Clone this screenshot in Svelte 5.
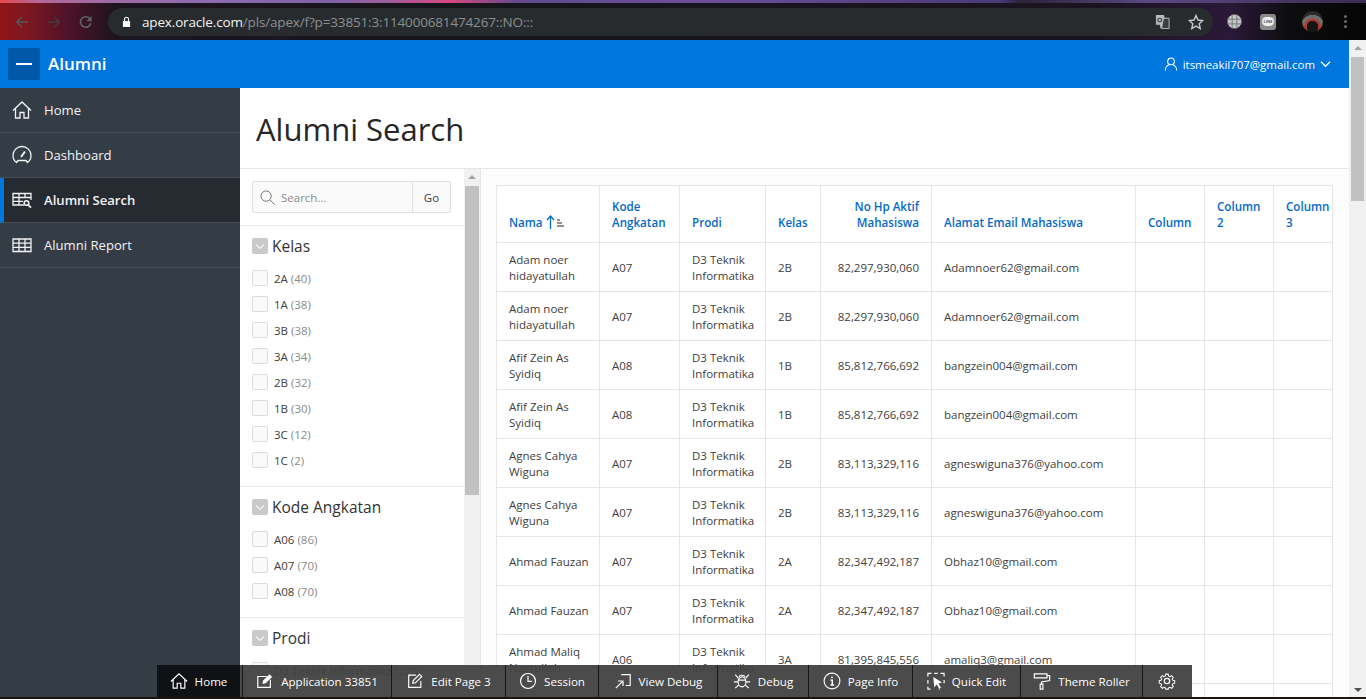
<script>
  const nav = [
    { label: 'Home', icon: 'home' },
    { label: 'Dashboard', icon: 'gauge' },
    { label: 'Alumni Search', icon: 'search', active: true },
    { label: 'Alumni Report', icon: 'table' }
  ];
  const groups = [
    { title: 'Kelas', items: [['2A', 40], ['1A', 38], ['3B', 38], ['3A', 34], ['2B', 32], ['1B', 30], ['3C', 12], ['1C', 2]] },
    { title: 'Kode Angkatan', items: [['A06', 86], ['A07', 70], ['A08', 70]] },
    { title: 'Prodi', items: [['D3 Teknik Informatika', 226]] }
  ];
  const base = [
    ['Adam noer hidayatullah', 'A07', '2B', '82,297,930,060', 'Adamnoer62@gmail.com'],
    ['Adam noer hidayatullah', 'A07', '2B', '82,297,930,060', 'Adamnoer62@gmail.com'],
    ['Afif Zein As Syidiq', 'A08', '1B', '85,812,766,692', 'bangzein004@gmail.com'],
    ['Afif Zein As Syidiq', 'A08', '1B', '85,812,766,692', 'bangzein004@gmail.com'],
    ['Agnes Cahya Wiguna', 'A07', '2B', '83,113,329,116', 'agneswiguna376@yahoo.com'],
    ['Agnes Cahya Wiguna', 'A07', '2B', '83,113,329,116', 'agneswiguna376@yahoo.com'],
    ['Ahmad Fauzan', 'A07', '2A', '82,347,492,187', 'Obhaz10@gmail.com'],
    ['Ahmad Fauzan', 'A07', '2A', '82,347,492,187', 'Obhaz10@gmail.com'],
    ['Ahmad Maliq Nasrulloh', 'A06', '3A', '81,395,845,556', 'amaliq3@gmail.com'],
    ['Ahmad Maliq Nasrulloh', 'A06', '3A', '81,395,845,556', 'amaliq3@gmail.com']
  ];
  const tools = [
    { label: 'Home', icon: 'home', active: true },
    { label: 'Application 33851', icon: 'app' },
    { label: 'Edit Page 3', icon: 'edit' },
    { label: 'Session', icon: 'clock' },
    { label: 'View Debug', icon: 'view' },
    { label: 'Debug', icon: 'bug' },
    { label: 'Page Info', icon: 'info' },
    { label: 'Quick Edit', icon: 'quick' },
    { label: 'Theme Roller', icon: 'roller' },
    { label: '', icon: 'gear' }
  ];
</script>

{#snippet glyph(name)}
  <svg class="glyph" viewBox="0 0 20 20" fill="none" stroke="currentColor" stroke-width="1.3" aria-hidden="true">
    {#if name === 'home'}
      <path d="M1 10.500 10 2l9 8.500M3.500 8.500V18H8v-5.500h4V18h4.500V8.500" />
    {:else if name === 'gauge'}
      <path d="M4.500 17.500C2.300 16 1 13.400 1 10.500a9 9 0 0 1 18 0c0 2.900-1.300 5.500-3.500 7l-1.500-2H6z" /><path d="m9 12 4-5.500" stroke-width="2" />
    {:else if name === 'search'}
      <path d="M12 15H1V3.500h18V10M1 7.500h18M1 11.300h10M7 3.500V15M13 3.500V8" /><circle cx="14.500" cy="13" r="2.300" stroke-width="1.600" /><path d="m16.300 15 2.700 2.700" stroke-width="1.800" />
    {:else if name === 'table'}
      <path d="M1 4h18v12.500H1zM1 8.200h18M1 12.300h18M7 4v12.500M13 4v12.500" />
    {:else if name === 'app'}
      <path d="M16 8.500V17H2V5h10" /><path d="M8 12.500l.3-2.500L15 3.500l2 2L10.500 12z" fill="currentColor" />
    {:else if name === 'edit'}
      <path d="M16.500 10v7H3V3.500h8" /><path d="m7.500 12.500.6-3L15 2.500l2.500 2.500-7 7z" />
    {:else if name === 'clock'}
      <circle cx="10" cy="10" r="8.300" /><path d="M10 4.500V10.500H14.500" />
    {:else if name === 'view'}
      <path d="M8 3h10v12h-5" /><path d="M2 18l8-8M4.500 10H10v5.500" />
    {:else if name === 'bug'}
      <ellipse cx="10" cy="11" rx="4.300" ry="5.500" /><path d="M6.500 5.500c1-2.500 6-2.500 7 0M2.500 3l3.500 4M17.500 3 14 7M1 11h4.500M19 11h-4.500M2.500 18l3.500-3.500M17.500 18 14 14.500M6 9h8" />
    {:else if name === 'info'}
      <circle cx="10" cy="10" r="8.800" /><path d="M10 5v2M8.300 9H10.300v5.500M8.300 14.500h4" stroke-width="1.600" />
    {:else if name === 'quick'}
      <path d="M1 5V1.500h4M8 1.500h4M15 1.500h4V5M1 9v4M1 16.500V19h3M19 9v3.500M13 19h1" /><path d="M7 5.500 8 17l2.800-3.200 3 4.700 1.700-1-2.800-4.700 4-1z" fill="currentColor" stroke="none" />
    {:else if name === 'roller'}
      <path d="M1.500 2h14v4.500h-14zM15.500 4H18.500V9.500L9.500 11v2.500" /><path d="M8 13.500h3V19H8z" />
    {:else if name === 'gear'}
      <path d="M8.500 1.500h3l.4 2.300 1.700.8 2-1.200 2.100 2.200-1.200 1.900.7 1.700 2.300.5v3l-2.300.5-.7 1.700 1.200 2-2.100 2.100-2-1.200-1.700.7-.4 1.500h-3l-.5-1.500-1.700-.7-1.900 1.200-2.200-2.100 1.200-2-.7-1.700-2.300-.5v-3l2.300-.5.700-1.700-1.200-1.900 2.200-2.200 1.900 1.200 1.700-.8z" transform="translate(1 1) scale(.9)" /><circle cx="10" cy="10" r="3" />
    {/if}
  </svg>
{/snippet}

<div class="screen">
  <div class="browser">
    <div class="tabstrip"></div>
    <div class="browserbar">
      <svg class="chrome-ic back" viewBox="0 0 16 16" fill="none" stroke="currentColor" stroke-width="1.700"><path d="M15 8H2M8 2 2 8l6 6" /></svg>
      <svg class="chrome-ic fwd" viewBox="0 0 16 16" fill="none" stroke="currentColor" stroke-width="1.700"><path d="M1 8h13M8 2l6 6-6 6" /></svg>
      <svg class="chrome-ic reload" viewBox="0 0 16 16" fill="none" stroke="currentColor" stroke-width="1.900"><path d="M13.500 9.500A6 6 0 1 1 12 3.800" /><path d="M14.500 1v6h-6z" fill="currentColor" stroke="none" /></svg>
      <div class="omnibox">
        <svg class="lock" viewBox="0 0 10 12" fill="#fff"><path d="M1 5h8v6.500H1z" /><path d="M2.800 5V3a2.200 2.200 0 0 1 4.400 0v2" fill="none" stroke="#fff" stroke-width="1.200" /></svg>
        <span class="url"><b>apex.oracle.com</b>/pls/apex/f?p=33851:3:114000681474267::NO:::</span>
        <svg class="translate" viewBox="0 0 16 16"><path d="M1 1h8.500l1 3.500H15v11H6l-1-4H1z" fill="#b6b9bc" /><path d="M9 4.500h6v11H7z" fill="#3c4043" stroke="#b6b9bc" /><circle cx="5" cy="6.500" r="2" fill="none" stroke="#3c4043" stroke-width="1.200" /></svg>
        <svg class="star" viewBox="0 0 16 16" fill="none" stroke="#c6c9cc" stroke-width="1.400"><path d="m8 1.500 2 4.500 4.800.5-3.600 3.200 1 4.800L8 12.100l-4.200 2.400 1-4.800L1.200 6.500 6 6z" /></svg>
      </div>
      <svg class="ext" viewBox="0 0 16 16"><circle cx="8" cy="8" r="7.500" fill="#c2c4c6" /><path d="M0 5.500h16M0 10.500h16M5.500 0v16M10.500 0v16" stroke="#6d6f72" stroke-width=".9" /></svg>
      <div class="line-ext"><span>LINE</span></div>
      <div class="avatar"></div>
      <div class="kebab"><i></i><i></i><i></i></div>
    </div>
  </div>

  <div class="viewport">
    <div class="page">
      <header class="appbar">
        <button class="burger" aria-label="Menu"><i></i></button>
        <span class="brand">Alumni</span>
        <div class="user">
          <svg viewBox="0 0 16 16" fill="none" stroke="currentColor" stroke-width="1.200"><circle cx="8" cy="5" r="3.800" /><path d="M1.500 15.500c0-3.500 2-6 4-6.200M14.500 15.500c0-3.500-2-6-4-6.200" /></svg>
          <span>itsmeakil707@gmail.com</span>
          <svg class="chev" viewBox="0 0 12 8" fill="none" stroke="currentColor" stroke-width="1.300"><path d="m1 1.500 5 5 5-5" /></svg>
        </div>
      </header>

      <div class="body">
        <nav class="sidenav">
          {#each nav as item}
            <div class="navitem" class:active={item.active}>
              {@render glyph(item.icon)}
              <span>{item.label}</span>
            </div>
          {/each}
        </nav>

        <main class="main">
          <div class="titlebar"><h1>Alumni Search</h1></div>
          <div class="content">
            <aside class="filters">
              <div class="searchrow">
                <div class="searchbox">
                  <svg viewBox="0 0 16 16" fill="none" stroke="#707070" stroke-width="1"><circle cx="6.500" cy="6.500" r="5.500" /><path d="m10.500 10.500 5 5" /></svg>
                  <span>Search...</span>
                  <div class="go">Go</div>
                </div>
              </div>
              {#each groups as g}
                <section class="group">
                  <div class="grouphead">
                    <span class="toggle"><svg viewBox="0 0 16 16" fill="none" stroke="#f2f2f2" stroke-width="1.200"><path d="m4 6.500 4 4 4-4" /></svg></span>
                    <h2>{g.title}</h2>
                  </div>
                  {#each g.items as it}
                    <div class="check"><span class="box"></span><span class="lbl">{it[0]} <em>({it[1]})</em></span></div>
                  {/each}
                </section>
              {/each}
            </aside>
            <div class="vscroll inner">
              <span class="up"></span><span class="thumb"></span>
            </div>
            <section class="results">
              <table>
                <colgroup>
                  <col class="c1" /><col class="c2" /><col class="c3" /><col class="c4" /><col class="c5" /><col class="c6" /><col class="c7" /><col class="c8" /><col class="c9" />
                </colgroup>
                <thead>
                  <tr>
                    <th>Nama <svg class="sort" viewBox="0 0 18 14" fill="none"><path d="M4.500 14V1.500M1 5l3.500-4L8 5" stroke="#0b6bcb" stroke-width="1.300" /><path d="M11 5h3M11 8h5M11 11h7" stroke="#222" stroke-width="1" /></svg></th>
                    <th>Kode Angkatan</th>
                    <th>Prodi</th>
                    <th>Kelas</th>
                    <th class="num">No Hp Aktif Mahasiswa</th>
                    <th>Alamat Email Mahasiswa</th>
                    <th>Column</th>
                    <th>Column 2</th>
                    <th>Column 3</th>
                  </tr>
                </thead>
                <tbody>
                  {#each base as r}
                    <tr>
                      <td class="name">{r[0]}</td><td>{r[1]}</td><td>D3 Teknik Informatika</td><td>{r[2]}</td><td class="num">{r[3]}</td><td>{r[4]}</td><td></td><td></td><td></td>
                    </tr>
                  {/each}
                </tbody>
              </table>
            </section>
          </div>
        </main>
      </div>
    </div>
    <div class="vscroll outer">
      <span class="up"></span><span class="thumb"></span><span class="down"></span>
    </div>
  </div>
  <div class="taskstrip"></div>

  <div class="devbar">
    {#each tools as t}
      <div class="tool" class:active={t.active}>
        {@render glyph(t.icon)}
        {#if t.label}<span>{t.label}</span>{/if}
      </div>
    {/each}
  </div>
</div>

<style>
  :global(body) { margin: 0; background: #fff; }
  .screen {
    position: relative;
    display: flex;
    flex-direction: column;
    width: 1366px;
    height: 699px;
    overflow: hidden;
    font-family: "Open Sans", "Noto Sans", sans-serif;
    color: #404040;
  }
  .browser { height: 40px; flex: none; display: flex; flex-direction: column; }
  .tabstrip {
    height: 3px;
    background: linear-gradient(90deg, #e4484f 0, #b06a9a 40px, #8f6cb0 200px, #7e62a8 330px, #9a5f9e 380px, #d5487e 450px, #5f4a8f 520px, #6b4f99 700px, #4a3a78 1000px, #2c2238 1020px, #5b4a82 1150px, #3c2b52 1366px);
  }
  .browserbar {
    flex: 1;
    display: flex;
    align-items: center;
    background: linear-gradient(90deg, #8e1516 0, #7f1720 25px, #4d1228 70px, #1d1420 115px, #15151b 500px, #1b1420 1100px, #2a1838 1230px, #0d0d10 1290px, #050505 1366px);
  }
  .chrome-ic { width: 14px; height: 14px; flex: none; color: #55585a; }
  .back { margin-left: 15px; }
  .fwd { margin-left: 18px; color: #46383f; }
  .reload { margin-left: 18px; color: #5f6264; }
  .omnibox {
    margin-left: 15px;
    width: 1105px;
    height: 28px;
    border-radius: 14px;
    background: #282b2e;
    display: flex;
    align-items: center;
  }
  .lock { width: 9px; height: 12px; margin-left: 14px; flex: none; }
  .url {
    margin-left: 11px;
    font-size: 13.500px;
    letter-spacing: -.16px;
    color: #8c8f92;
    white-space: nowrap;
    flex: 1;
  }
  .url b { font-weight: 400; color: #f2f3f4; }
  .translate { width: 15px; height: 15px; margin-right: 18px; }
  .star { width: 16px; height: 16px; margin-right: 9px; }
  .ext { width: 15px; height: 15px; margin-left: 14px; flex: none; }
  .line-ext {
    width: 16px; height: 16px; margin-left: 18px; border-radius: 3px; background: #8a8a8a;
    display: flex; align-items: center; justify-content: center; flex: none;
  }
  .line-ext span {
    background: #eee; color: #555; font-size: 4px; font-weight: 700; border-radius: 5px; padding: 2px 1px;
    line-height: 5px;
  }
  .avatar {
    width: 21px; height: 21px; margin-left: 26px; border-radius: 50%; flex: none;
    background: radial-gradient(circle at 50% 75%, #161616 0 30%, #b33a2a 32% 42%, #6e6e6e 45% 62%, #2a2a2a 64%);
  }
  .kebab { margin-left: 21px; display: flex; flex-direction: column; gap: 2px; }
  .kebab i { width: 3px; height: 3px; border-radius: 50%; background: #6c6c6c; }

  .viewport { flex: 1; min-height: 0; display: flex; }
  .page { flex: 1; min-width: 0; display: flex; flex-direction: column; }

  .appbar {
    height: 48px; flex: none; background: #0076df; color: #fff;
    display: flex; align-items: center; padding: 0 18px 0 8px;
  }
  .burger {
    width: 32px; height: 32px; border: 0; border-radius: 2px; padding: 0; background: #0059a8;
    display: flex; align-items: center; justify-content: center;
  }
  .burger i { width: 16px; height: 2px; background: #fff; }
  .brand { margin: -1px 0 0 8px; font-size: 17px; font-weight: 600; flex: 1; }
  .user { display: flex; align-items: center; font-size: 11.450px; font-weight: 500; }
  .user svg { width: 14px; height: 16px; margin-right: 5px; }
  .user .chev { width: 11px; height: 8px; margin: 0 0 0 5px; }

  .body { flex: 1; min-height: 0; display: flex; }
  .sidenav { width: 240px; flex: none; background: #343d46; color: #f1f3f4; }
  .navitem {
    height: 44px;
    border-bottom: 1px solid #47505a;
    display: flex; align-items: center;
    padding-left: 12px;
    font-size: 13.100px;
  }
  .navitem .glyph { width: 20px; height: 20px; margin-right: 12px; }
  .navitem.active {
    background: #262b31; border-left: 4px solid #0076df; padding-left: 8px; font-weight: 600;
  }

  .main { flex: 1; min-width: 0; display: flex; flex-direction: column; }
  .titlebar {
    height: 81px; flex: none; box-sizing: border-box; border-bottom: 1px solid #e6e6e6;
    display: flex; align-items: center; padding: 0 16px;
  }
  h1 { margin: 1px 0 0; font-size: 31px; font-weight: 500; color: #262626; }
  .content { flex: 1; min-height: 0; display: flex; }
  .filters { width: 224px; flex: none; overflow: hidden; }
  .searchrow { padding: 12px 13px 12px 12px; }
  .searchbox {
    height: 30px; border: 1px solid #e0e0e0; border-radius: 2px; background: #fafafa;
    display: flex; align-items: center; font-size: 11.500px; color: #8a8a8a;
  }
  .searchbox svg { width: 15px; height: 15px; margin: 0 6px 0 7px; }
  .searchbox span { flex: 1; }
  .go {
    width: 37px; height: 100%; border-left: 1px solid #e0e0e0; color: #404040;
    display: flex; align-items: center; justify-content: center;
  }
  .group { border-top: 1px solid #e6e6e6; padding: 12px 12px 8px; }
  .grouphead { display: flex; align-items: center; height: 16px; margin-bottom: 16px; gap: 4px; }
  .toggle { width: 16px; height: 16px; border-radius: 2px; background: #c9c9c9; display: block; }
  .toggle svg { display: block; width: 16px; height: 16px; }
  h2 { margin: 0; font-size: 15.500px; font-weight: 400; color: #333; white-space: nowrap; }
  .check { display: flex; align-items: center; height: 26px; margin-top: -5px; margin-bottom: 5px; white-space: nowrap; }
  .box { width: 14px; height: 14px; border: 1px solid #dcdcdc; border-radius: 2px; background: #fafafa; flex: none; }
  .lbl { margin-left: 6px; font-size: 11.500px; color: #404040; }
  .lbl em { font-style: normal; color: #8a8a8a; }

  .vscroll { background: #f1f1f1; position: relative; flex: none; }
  .vscroll.inner { width: 16px; border-right: 1px solid #e6e6e6; }
  .vscroll.outer { width: 17px; }
  .thumb { position: absolute; background: #c1c1c1; }
  .inner .thumb { left: 1px; width: 14px; top: 17px; height: 309px; }
  .outer .thumb { left: 2px; width: 13px; top: 17px; height: 144px; }
  .up, .down { position: absolute; width: 0; height: 0; border-left: 4px solid transparent; border-right: 4px solid transparent; }
  .up { border-bottom: 4px solid #a3a3a3; top: 6px; left: 4px; }
  .outer .up { left: 4.500px; }
  .down { border-top: 4px solid #505050; bottom: 5px; left: 4.500px; }

  .results { flex: 1; min-width: 0; background: #fcfcfc; padding: 16px 16px 16px 15px; overflow: hidden; }
  table {
    table-layout: fixed; border-collapse: collapse; width: 836px; background: #fff;
    font-size: 11.500px; line-height: 16px;
  }
  .c1 { width: 103px; } .c2 { width: 80px; } .c3 { width: 86px; } .c4 { width: 55px; }
  .c5 { width: 111px; } .c6 { width: 204px; } .c7 { width: 69px; } .c8 { width: 69px; } .c9 { width: 59px; }
  th, td { border: 1px solid #e6e6e6; box-sizing: border-box; text-align: left; overflow: hidden; }
  th { padding: 12px 12px 11px; vertical-align: bottom; color: #056ac8; font-weight: 600; font-size: 11.600px; height: 57px; }
  td { padding: 9px 12px 7px; height: 49px; vertical-align: middle; }
  td.name { padding-right: 8px; }
  .num { text-align: right; }
  .sort { width: 18px; height: 14px; vertical-align: -2px; }

  .taskstrip { height: 2px; flex: none; background: #1c140e; }

  .devbar {
    position: absolute; left: 157px; top: 665px; width: 1035px; height: 32px;
    background: rgba(64, 64, 64, .94); color: #fff;
    display: grid;
    grid-template-columns: 83px 3px 149px 114px 93px 119px 91px 104px 108px 122px 48px;
    font-size: 11.600px;
  }
  .tool {
    display: flex; align-items: center; justify-content: center; gap: 7px; white-space: nowrap;
    border-right: 1px solid #161616; box-sizing: border-box;
  }
  .tool .glyph { width: 18px; height: 18px; flex: none; }
  .tool.active { background: #101114; border-right: 0; }
  .tool.active + .tool { grid-column: 3; }
  .tool:last-child { border-right: 0; }
  .devbar::before { content: ""; grid-column: 2; grid-row: 1; border-right: 1px solid #161616; }
</style>
